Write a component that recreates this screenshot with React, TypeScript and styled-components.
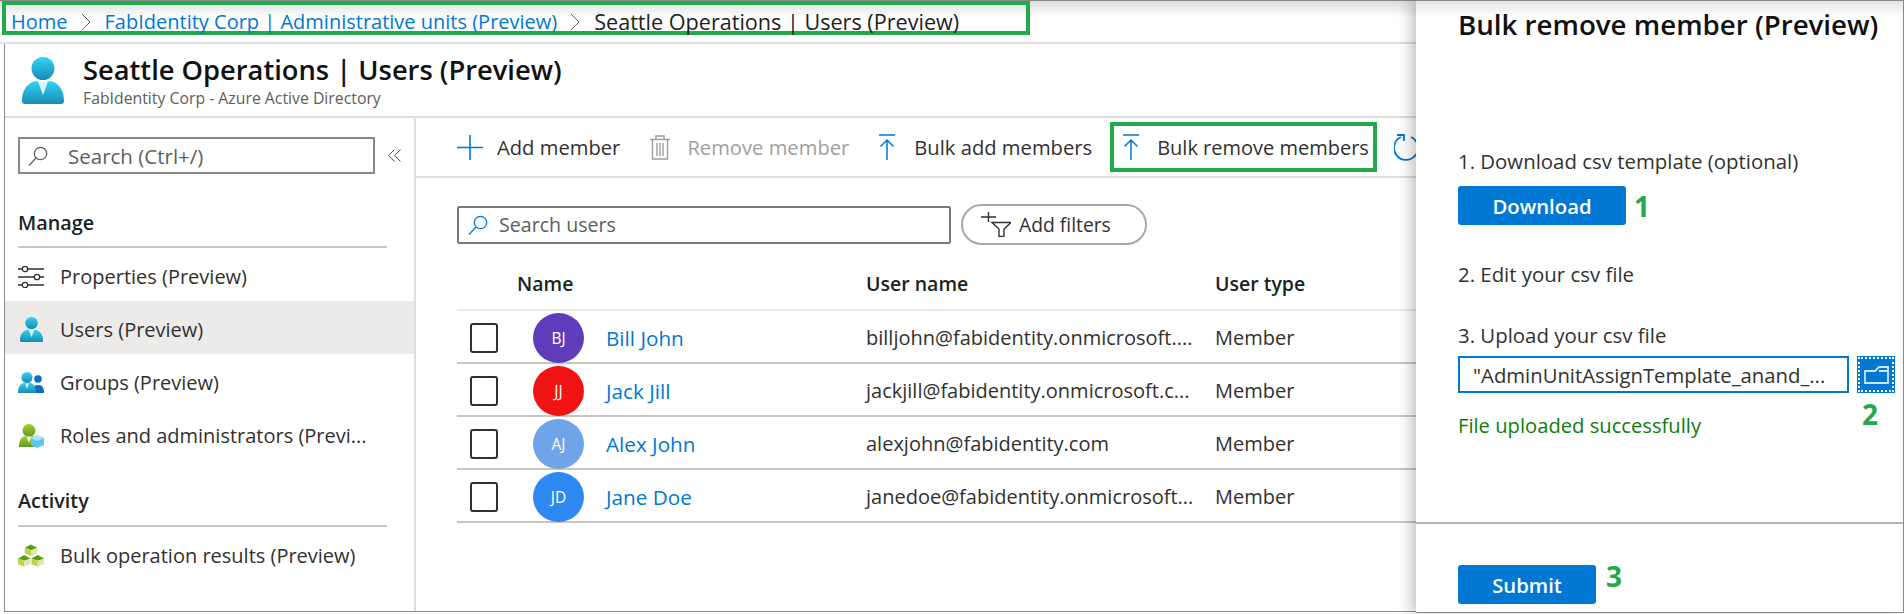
import React from 'react';
import styled, { createGlobalStyle } from 'styled-components';

const BLUE = '#0078d4';
const MARK = '#21a94b';

const GlobalStyle = createGlobalStyle`
  html, body {
    margin: 0;
    padding: 0;
    background: #fff;
  }
  * {
    box-sizing: border-box;
  }
  body {
    font-family: 'Open Sans', 'Noto Sans', sans-serif;
    color: #323130;
  }
`;

const users = [
  { initials: 'BJ', color: '#5f3dba', name: 'Bill John', mail: 'billjohn@fabidentity.onmicrosoft....' },
  { initials: 'JJ', color: '#f01313', name: 'Jack Jill', mail: 'jackjill@fabidentity.onmicrosoft.c...' },
  { initials: 'AJ', color: '#6fa5e8', name: 'Alex John', mail: 'alexjohn@fabidentity.com' },
  { initials: 'JD', color: '#2e88f2', name: 'Jane Doe', mail: 'janedoe@fabidentity.onmicrosoft...' },
];

function PersonIcon({ width, height, id }: { width: number; height: number; id: string }) {
  return (
    <svg width={width} height={height} viewBox="0 0 42 47" preserveAspectRatio="none">
      <defs>
        <linearGradient id={id} x1="0" y1="0" x2="0" y2="1">
          <stop offset="0" stopColor="#32d4f5" />
          <stop offset="1" stopColor="#198ab3" />
        </linearGradient>
      </defs>
      <circle cx="21" cy="11.5" r="11.5" fill={`url(#${id})`} />
      <path d="M0 44c0-10 4-17 13-20l8 2 8-2c9 3 13 10 13 20 0 2-1 3-3 3H3c-2 0-3-1-3-3z" fill={`url(#${id})`} />
      <path d="M16 24.5h10L21 38z" fill="#d8f3fa" />
    </svg>
  );
}

function SlidersIcon() {
  return (
    <svg width="26" height="22" viewBox="0 0 26 22" fill="none" stroke="#323130" strokeWidth="1.3">
      <path d="M0 3h4M10 3h16M0 11h16M22 11h4M0 19h4M10 19h16" />
      <circle cx="7" cy="3" r="2.700" />
      <circle cx="19" cy="11" r="2.700" />
      <circle cx="7" cy="19" r="2.700" />
    </svg>
  );
}

function GroupIcon() {
  return (
    <svg width="26" height="22" viewBox="0 0 26 22">
      <defs>
        <linearGradient id="grp" x1="0" y1="0" x2="0" y2="1">
          <stop offset="0" stopColor="#32d4f5" />
          <stop offset="1" stopColor="#198ab3" />
        </linearGradient>
      </defs>
      <circle cx="20" cy="7" r="3.8" fill="#0a6fc9" />
      <path d="M14 21c0-5 1-8 6-8s6 3 6 8z" fill="#0a6fc9" />
      <circle cx="9" cy="5.5" r="5.5" fill="url(#grp)" />
      <path d="M0 21c0-6 2-9 6-10.500l3 1 3-1c4 1.500 6 4.500 6 10.500z" fill="url(#grp)" />
      <path d="M7.200 11.500h3.600L9 17z" fill="#d8f3fa" />
    </svg>
  );
}

function RolesIcon() {
  return (
    <svg width="26" height="24" viewBox="0 0 26 24">
      <defs>
        <linearGradient id="role" x1="0" y1="0" x2="0" y2="1">
          <stop offset="0" stopColor="#a4d233" />
          <stop offset="1" stopColor="#5e9624" />
        </linearGradient>
      </defs>
      <circle cx="11" cy="6.500" r="6.500" fill="url(#role)" />
      <path d="M1 23c0-7 2-10 6-11l4 1 4-1c4 1 6 4 6 11z" fill="url(#role)" />
      <path d="M8.500 12.500h5L11 19z" fill="#eef6d5" />
      <path d="M19 11l7 3v7l-7 3-6-3v-7z" fill="#5cc8ee" />
      <path d="M19 11l7 3-7 3-6-3z" fill="#a8e6f8" />
    </svg>
  );
}

function Cube({ x, y }: { x: number; y: number }) {
  return (
    <g transform={`translate(${x} ${y})`}>
      <path d="M0 4l6.500 2.500V12L0 9.500z" fill="#b9d64a" />
      <path d="M13 4L6.500 6.500V12L13 9.500z" fill="#dcebA0" />
      <path d="M6.500 0L13 3.500 6.500 6 0 3.500z" fill="#5a9e12" />
    </g>
  );
}

function CubesIcon() {
  return (
    <svg width="27" height="23" viewBox="0 0 27 23">
      <Cube x={7} y={0} />
      <Cube x={0} y={11} />
      <Cube x={14} y={11} />
    </svg>
  );
}

function MagnifierIcon({ color, size }: { color: string; size: number }) {
  return (
    <svg width={size} height={size} viewBox="0 0 20 20" fill="none" stroke={color} strokeWidth="1.300">
      <circle cx="12.500" cy="7.500" r="6.200" />
      <path d="M8 12L1 19.500" />
    </svg>
  );
}

function PlusIcon() {
  return (
    <svg width="26" height="25" viewBox="0 0 26 25" stroke={BLUE} strokeWidth="1.600">
      <path d="M0 12.500h26M13 0v25" />
    </svg>
  );
}

function TrashIcon() {
  return (
    <svg width="20" height="25" viewBox="0 0 20 25" fill="none" stroke="#a19f9d" strokeWidth="1.400">
      <path d="M0 4.500h20M6 4.500V1h8v3.500M2.500 4.500V24h15V4.500M7 8v13M10 8v13M13 8v13" />
    </svg>
  );
}

function UploadIcon() {
  return (
    <svg width="16" height="26" viewBox="0 0 16 26" fill="none" stroke={BLUE} strokeWidth="1.500">
      <path d="M0 1h16M8 26V6M1.500 12.500L8 6l6.500 6.500" />
    </svg>
  );
}

function RefreshIcon() {
  return (
    <svg width="30" height="27" viewBox="0 0 30 27" fill="none" stroke={BLUE} strokeWidth="1.800">
      <path d="M17 3A12 12 0 1 1 7 3M3 1h7v6" />
    </svg>
  );
}

function FilterIcon() {
  return (
    <svg width="30" height="25" viewBox="0 0 30 25" fill="none" stroke="#323130" strokeWidth="1.400">
      <path d="M0 5h15M7.500 0v10" />
      <path d="M11 10.500h19l-7 6.500v7.500h-5V17z" />
    </svg>
  );
}

function FolderIcon() {
  return (
    <svg width="25" height="18" viewBox="0 0 25 18" fill="none" stroke="#cfe6fa" strokeWidth="1.800">
      <path d="M1 17V5h10l4-4h9v16zM15 5h9" />
    </svg>
  );
}

function Chevron() {
  return (
    <svg width="10" height="18" viewBox="0 0 10 18" fill="none" stroke="#605e5c" strokeWidth="1">
      <path d="M1 1l8 8-8 8" />
    </svg>
  );
}

function DoubleChevron() {
  return (
    <svg width="13" height="13" viewBox="0 0 13 13" fill="none" stroke="#484644" strokeWidth="1">
      <path d="M6.500 0.500L0.700 6.500l5.800 6M12.500 0.500L6.700 6.500l5.800 6" />
    </svg>
  );
}

export default function App() {
  return (
    <Page>
      <GlobalStyle />
      <Main>
        <BreadcrumbBar>
          <BreadcrumbMark>
            <CrumbLink>Home</CrumbLink>
            <Chevron />
            <CrumbLink>FabIdentity Corp | Administrative units (Preview)</CrumbLink>
            <Chevron />
            <CrumbCurrent>Seattle Operations | Users (Preview)</CrumbCurrent>
          </BreadcrumbMark>
        </BreadcrumbBar>
        <Frame>
          <Header>
            <HeaderIcon>
              <PersonIcon width={42} height={47} id="head" />
            </HeaderIcon>
            <div>
              <Title>Seattle Operations | Users (Preview)</Title>
              <Subtitle>FabIdentity Corp - Azure Active Directory</Subtitle>
            </div>
          </Header>
          <Body>
            <Sidebar>
              <SideSearchRow>
                <SideSearch>
                  <MagnifierIcon color="#605e5c" size={20} />
                  <span>Search (Ctrl+/)</span>
                </SideSearch>
                <Collapse><DoubleChevron /></Collapse>
              </SideSearchRow>
              <SectionTitle>Manage</SectionTitle>
              <NavItem>
                <NavIcon><SlidersIcon /></NavIcon>
                Properties (Preview)
              </NavItem>
              <NavItem $active>
                <NavIcon><PersonIcon width={23} height={25} id="nav-user" /></NavIcon>
                Users (Preview)
              </NavItem>
              <NavItem>
                <NavIcon><GroupIcon /></NavIcon>
                Groups (Preview)
              </NavItem>
              <NavItem>
                <NavIcon><RolesIcon /></NavIcon>
                Roles and administrators (Previ...
              </NavItem>
              <SectionTitle $activity>Activity</SectionTitle>
              <NavItem>
                <NavIcon><CubesIcon /></NavIcon>
                Bulk operation results (Preview)
              </NavItem>
            </Sidebar>
            <Content>
              <Toolbar>
                <ToolItem $gap={14}>
                  <PlusIcon />
                  Add member
                </ToolItem>
                <ToolItem $gap={17} $disabled>
                  <TrashIcon />
                  Remove member
                </ToolItem>
                <ToolItem $gap={19}>
                  <UploadIcon />
                  Bulk add members
                </ToolItem>
                <ToolMark>
                  <UploadIcon />
                  Bulk remove members
                </ToolMark>
                <RefreshIcon />
              </Toolbar>
              <ListArea>
                <FilterRow>
                  <UserSearch>
                    <MagnifierIcon color={BLUE} size={20} />
                    <span>Search users</span>
                  </UserSearch>
                  <FilterPill>
                    <FilterIcon />
                    Add filters
                  </FilterPill>
                </FilterRow>
                <TableHead>
                  <span />
                  <span>Name</span>
                  <span>User name</span>
                  <span>User type</span>
                </TableHead>
                {users.map((u) => (
                  <UserRow key={u.initials}>
                    <Check />
                    <Avatar $color={u.color}>{u.initials}</Avatar>
                    <UserName>{u.name}</UserName>
                    <span>{u.mail}</span>
                    <span>Member</span>
                  </UserRow>
                ))}
              </ListArea>
            </Content>
          </Body>
        </Frame>
      </Main>
      <Panel>
        <PanelTop>
          <PanelTitle>Bulk remove member (Preview)</PanelTitle>
          <StepLabel $top={100}>1. Download csv template (optional)</StepLabel>
          <ButtonRow $top={11}>
            <PrimaryButton $width={168}>Download</PrimaryButton>
            <StepNumber>1</StepNumber>
          </ButtonRow>
          <StepLabel $top={35}>2. Edit your csv file</StepLabel>
          <StepLabel $top={33}>3. Upload your csv file</StepLabel>
          <UploadRow>
            <FileInput>"AdminUnitAssignTemplate_anand_...</FileInput>
            <FolderButton><FolderIcon /></FolderButton>
          </UploadRow>
          <StatusRow>
            <StatusText>File uploaded successfully</StatusText>
            <StepNumber>2</StepNumber>
          </StatusRow>
        </PanelTop>
        <PanelFooter>
          <PrimaryButton $width={138}>Submit</PrimaryButton>
          <FooterNumber>3</FooterNumber>
        </PanelFooter>
      </Panel>
    </Page>
  );
}

const Page = styled.div`
  display: flex;
  width: 1904px;
  height: 614px;
  overflow: hidden;
  background: #fff;
`;

const Main = styled.div`
  display: flex;
  flex-direction: column;
  width: 1416px;
  overflow: hidden;
`;

const BreadcrumbBar = styled.div`
  flex: none;
  height: 44px;
  padding: 0 0 0 2px;
  border-top: 1px solid #8a8a8a;
  border-bottom: 2px solid #e1dfdd;
  background: linear-gradient(#dcdcdc, #fff 16px);
`;

const BreadcrumbMark = styled.div`
  display: flex;
  align-items: center;
  width: 1028px;
  height: 34px;
  padding: 7px 0 0 5px;
  border: 4px solid ${MARK};
  font-size: 20px;
  white-space: nowrap;

  svg {
    margin: 0 14px 0 13px;
  }
`;

const CrumbLink = styled.span`
  color: ${BLUE};
`;

const CrumbCurrent = styled.span`
  font-size: 21.6px;
  color: #201f1e;
`;

const Frame = styled.div`
  flex: 1;
  display: flex;
  flex-direction: column;
  min-height: 0;
  margin: 0 0 2px 4px;
  border-left: 1px solid #8a8a8a;
  border-bottom: 1px solid #8a8a8a;
`;

const Header = styled.div`
  flex: none;
  display: flex;
  align-items: center;
  height: 74px;
  border-bottom: 2px solid #e1dfdd;
`;

const HeaderIcon = styled.div`
  display: flex;
  width: 78px;
  padding-left: 17px;
`;

const Title = styled.h1`
  margin: 0;
  font-size: 27.3px;
  line-height: 34px;
  font-weight: 600;
  color: #111;
`;

const Subtitle = styled.div`
  margin-top: 1px;
  font-size: 15.8px;
  line-height: 20px;
  color: #605e5c;
`;

const Body = styled.div`
  flex: 1;
  display: flex;
  min-height: 0;
`;

const Sidebar = styled.nav`
  flex: none;
  width: 411px;
  padding-top: 19px;
  border-right: 2px solid #e1dfdd;
`;

const SideSearchRow = styled.div`
  display: flex;
  align-items: center;
  padding-left: 13px;
`;

const SideSearch = styled.div`
  display: flex;
  align-items: center;
  gap: 20px;
  width: 357px;
  height: 37px;
  padding-left: 8px;
  border: 2px solid #8a8886;
  font-size: 20.5px;
  color: #605e5c;
`;

const Collapse = styled.span`
  display: flex;
  margin-left: 13px;
`;

const SectionTitle = styled.div<{ $activity?: boolean }>`
  margin: ${(p) => (p.$activity ? '27px' : '35px')} 27px 0 13px;
  padding-bottom: ${(p) => (p.$activity ? '10px' : '9px')};
  border-bottom: 2px solid #c8c6c4;
  font-size: 19.8px;
  line-height: 28px;
  font-weight: 600;
  color: #201f1e;
`;

const NavItem = styled.div<{ $active?: boolean }>`
  display: flex;
  align-items: center;
  height: 53px;
  padding: 4px 0 0 13px;
  background: ${(p) => (p.$active ? '#edebe9' : 'transparent')};
  font-size: 20px;
  color: #323130;
  white-space: nowrap;
`;

const NavIcon = styled.span`
  display: flex;
  justify-content: center;
  width: 26px;
  margin-right: 16px;
`;

const Content = styled.div`
  flex: 1;
  min-width: 0;
`;

const Toolbar = styled.div`
  display: flex;
  align-items: center;
  gap: 30px;
  height: 60px;
  padding-left: 41px;
  border-bottom: 2px solid #e1dfdd;
  white-space: nowrap;

  & > svg {
    flex: none;
    margin-left: -13px;
  }
`;

const ToolItem = styled.div<{ $gap: number; $disabled?: boolean }>`
  display: flex;
  align-items: center;
  gap: ${(p) => p.$gap}px;
  font-size: 20.2px;
  color: ${(p) => (p.$disabled ? '#a19f9d' : '#323130')};
`;

const ToolMark = styled.div`
  flex: none;
  display: flex;
  align-items: center;
  gap: 18px;
  width: 267px;
  height: 50px;
  margin-left: -12px;
  padding-left: 9px;
  border: 4px solid ${MARK};
  font-size: 20px;
  color: #323130;
`;

const ListArea = styled.div`
  padding-left: 41px;
`;

const FilterRow = styled.div`
  display: flex;
  align-items: center;
  gap: 10px;
  padding-top: 26px;
`;

const UserSearch = styled.div`
  display: flex;
  align-items: center;
  gap: 11px;
  width: 494px;
  height: 38px;
  padding-left: 9px;
  border: 2px solid #7a7a7a;
  border-radius: 2px;
  font-size: 19.6px;
  color: #605e5c;
`;

const FilterPill = styled.div`
  display: flex;
  align-items: center;
  gap: 8px;
  width: 186px;
  height: 41px;
  padding-left: 18px;
  border: 2px solid #a8a8a8;
  border-radius: 21px;
  font-size: 19.3px;
  color: #323130;
`;

const TableHead = styled.div`
  display: grid;
  grid-template-columns: 60px 349px 349px 1fr;
  align-items: center;
  height: 66px;
  padding-top: 12px;
  border-bottom: 2px solid #edebe9;
  font-size: 19.5px;
  font-weight: 600;
  color: #201f1e;
`;

const UserRow = styled.div`
  display: grid;
  grid-template-columns: 63px 73px 260px 349px 1fr;
  align-items: center;
  height: 53px;
  padding: 2px 0 0 13px;
  border-bottom: 2px solid #c8c6c4;
  font-size: 20px;
  color: #323130;
  white-space: nowrap;

  & > span {
    margin-bottom: 1px;
  }
`;

const Check = styled.div`
  width: 28px;
  height: 30px;
  border: 2px solid #323130;
  border-radius: 3px;
`;

const Avatar = styled.div<{ $color: string }>`
  display: flex;
  align-items: center;
  justify-content: center;
  width: 51px;
  height: 50px;
  border-radius: 50%;
  background: ${(p) => p.$color};
  font-size: 15.5px;
  color: #fff;
`;

const UserName = styled.span`
  font-size: 20.7px;
  color: ${BLUE};
`;

const Panel = styled.aside`
  position: relative;
  flex: none;
  display: flex;
  flex-direction: column;
  width: 488px;
  height: 613px;
  border-top: 1px solid #8a8a8a;
  border-right: 1px solid #8a8a8a;
  border-bottom: 1px solid #8a8a8a;
  background: linear-gradient(#e4e4e4, #fff 16px);
  box-shadow: -6px 0 12px rgba(0, 0, 0, 0.22);
`;

const PanelTop = styled.div`
  height: 523px;
  padding-left: 42px;
  border-bottom: 2px solid #b3b3b3;
`;

const PanelTitle = styled.h2`
  margin: 0;
  font-size: 27.7px;
  line-height: 46px;
  font-weight: 600;
  color: #111;
  white-space: nowrap;
`;

const StepLabel = styled.div<{ $top: number }>`
  margin-top: ${(p) => p.$top}px;
  font-size: 20.4px;
  line-height: 28px;
  color: #323130;
`;

const ButtonRow = styled.div<{ $top: number }>`
  display: flex;
  align-items: center;
  gap: 8px;
  margin-top: ${(p) => p.$top}px;
`;

const PrimaryButton = styled.div<{ $width: number }>`
  display: flex;
  align-items: center;
  justify-content: center;
  width: ${(p) => p.$width}px;
  height: 39px;
  border-radius: 3px;
  background: ${BLUE};
  font-size: 20.3px;
  font-weight: 600;
  color: #fff;
`;

const StepNumber = styled.span`
  font-size: 28px;
  line-height: 32px;
  font-weight: 700;
  color: ${MARK};
`;

const FooterNumber = styled(StepNumber)`
  margin-top: -5px;
`;

const UploadRow = styled.div`
  display: flex;
  gap: 8px;
  margin-top: 7px;
`;

const FileInput = styled.div`
  display: flex;
  align-items: center;
  width: 391px;
  height: 37px;
  padding-left: 13px;
  border: 2px solid ${BLUE};
  font-size: 20.3px;
  color: #323130;
  white-space: nowrap;
  overflow: hidden;
`;

const FolderButton = styled.div`
  display: flex;
  align-items: center;
  justify-content: center;
  width: 38px;
  height: 37px;
  background: ${BLUE};
  outline: 2px dotted #fff;
  outline-offset: -3px;
`;

const StatusRow = styled.div`
  display: flex;
  align-items: flex-start;
  margin-top: 5px;
`;

const StatusText = styled.div`
  width: 404px;
  margin-top: 14px;
  font-size: 20.2px;
  line-height: 26px;
  color: #107c10;
`;

const PanelFooter = styled.div`
  display: flex;
  align-items: flex-start;
  gap: 10px;
  padding: 41px 0 0 42px;
`;
